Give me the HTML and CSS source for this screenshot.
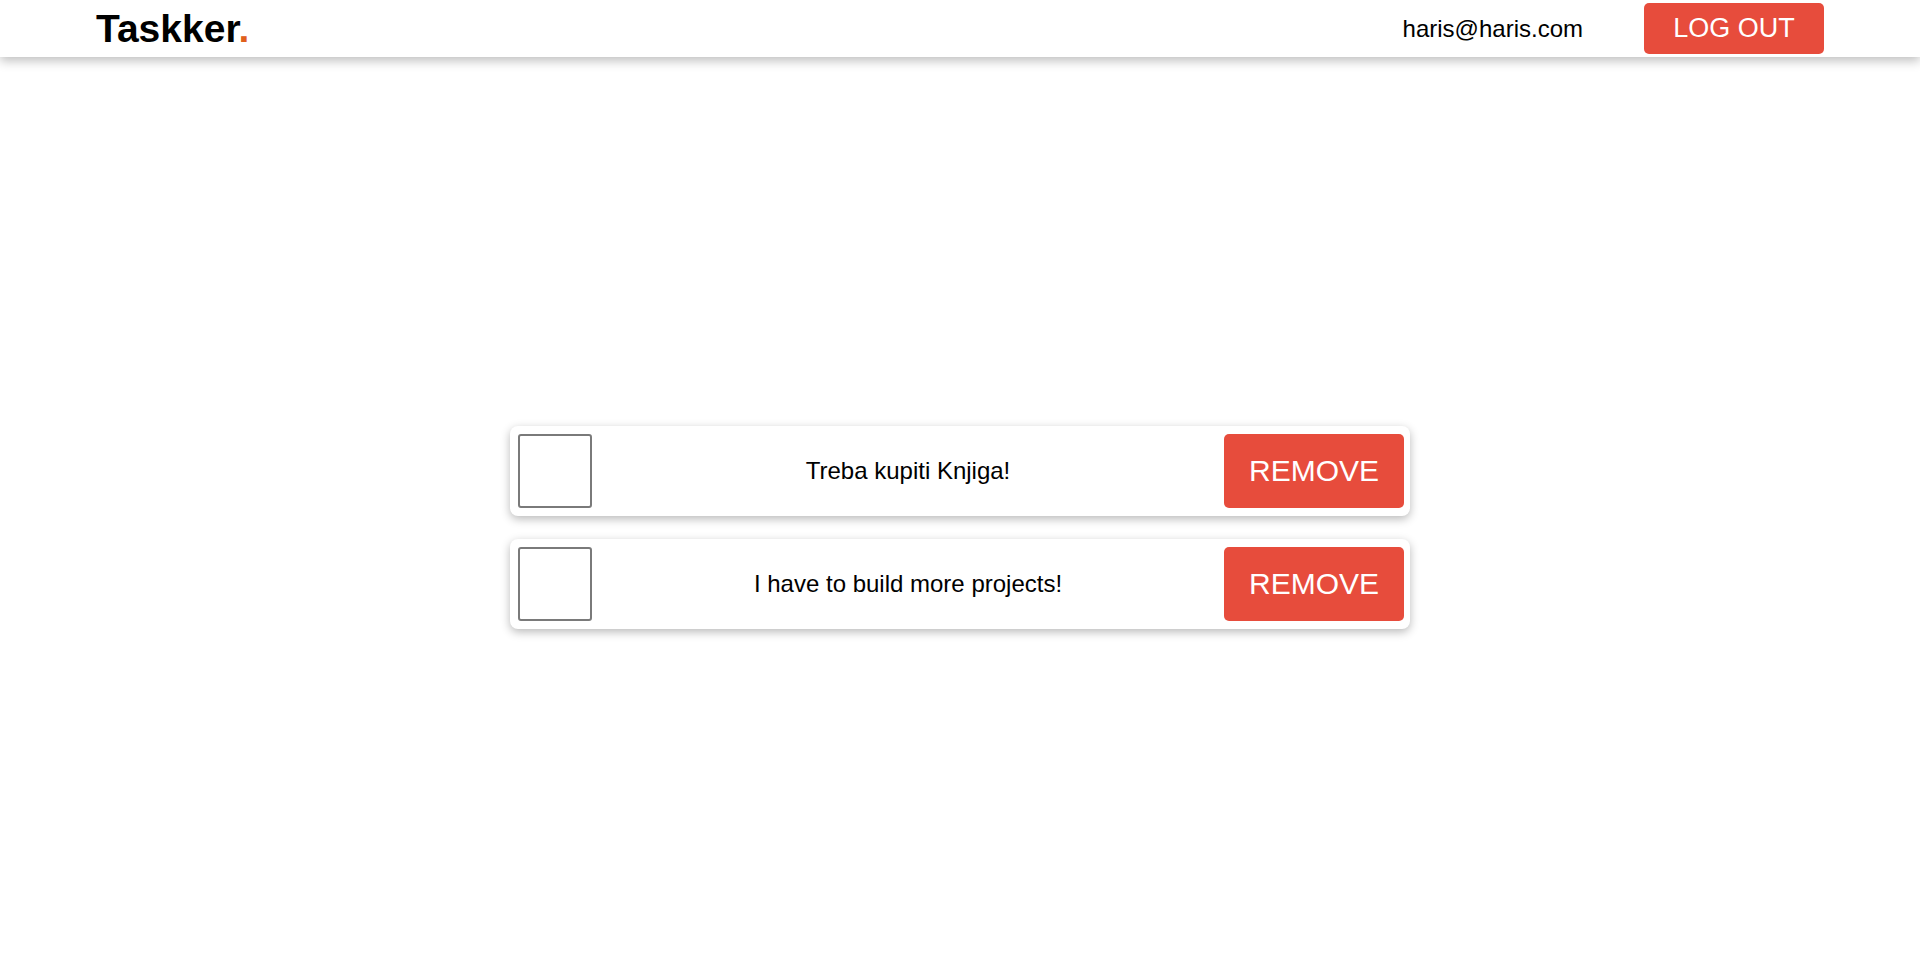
FILE: index.html
```html
<!DOCTYPE html>
<html lang="en">
<head>
<meta charset="utf-8">
<title>Taskker</title>
<link rel="stylesheet" href="styles.css">
</head>
<body>
<header class="topbar">
  <div class="logo">Taskker<span class="logo-dot">.</span></div>
  <div class="user">
    <span class="email">haris@haris.com</span>
    <button class="btn btn-logout">LOG OUT</button>
  </div>
</header>
<main class="tasks">
  <div class="task">
    <input type="checkbox" class="task-check">
    <p class="task-text">Treba kupiti Knjiga!</p>
    <button class="btn btn-remove">REMOVE</button>
  </div>
  <div class="task">
    <input type="checkbox" class="task-check">
    <p class="task-text">I have to build more projects!</p>
    <button class="btn btn-remove">REMOVE</button>
  </div>
</main>
</body>
</html>
```
FILE: styles.css
```css
* { box-sizing: border-box; }
html, body { margin: 0; padding: 0; }
body {
  font-family: "Liberation Sans", Arial, sans-serif;
  color: #000;
  background: #fff;
}
.topbar {
  position: relative;
  height: 57px;
  padding: 0 96px;
  display: flex;
  align-items: center;
  justify-content: space-between;
  background: #fff;
  box-shadow: 0 4px 10px rgba(0, 0, 0, 0.25);
}
.logo {
  font-size: 39px;
  font-weight: 700;
  line-height: 1;
}
.logo-dot { color: #e0601c; }
.user {
  display: flex;
  align-items: center;
  gap: 61px;
}
.email { font-size: 24px; }
.btn {
  font-family: "Liberation Sans", Arial, sans-serif;
  background: #e74c3c;
  color: #fff;
  border: none;
  border-radius: 5px;
  cursor: pointer;
}
.btn-logout {
  width: 180px;
  height: 51px;
  font-size: 27px;
  padding: 0;
}
.tasks {
  padding-top: 369px;
  padding-bottom: 40px;
  display: flex;
  flex-direction: column;
  align-items: center;
  gap: 23px;
}
.task {
  width: 900px;
  height: 90px;
  padding: 8px 6px 8px 8px;
  display: flex;
  align-items: center;
  background: #fff;
  border-radius: 8px;
  box-shadow: 0 3px 10px rgba(0, 0, 0, 0.28);
}
.task-check {
  appearance: none;
  -webkit-appearance: none;
  margin: 0;
  width: 74px;
  height: 74px;
  border: 2px solid #7a7a7a;
  border-radius: 3px;
  background: #fff;
  flex: none;
}
.task-text {
  flex: 1;
  margin: 0;
  text-align: center;
  font-size: 24px;
}
.btn-remove {
  width: 180px;
  height: 74px;
  font-size: 30px;
  padding: 0;
  flex: none;
}
```
